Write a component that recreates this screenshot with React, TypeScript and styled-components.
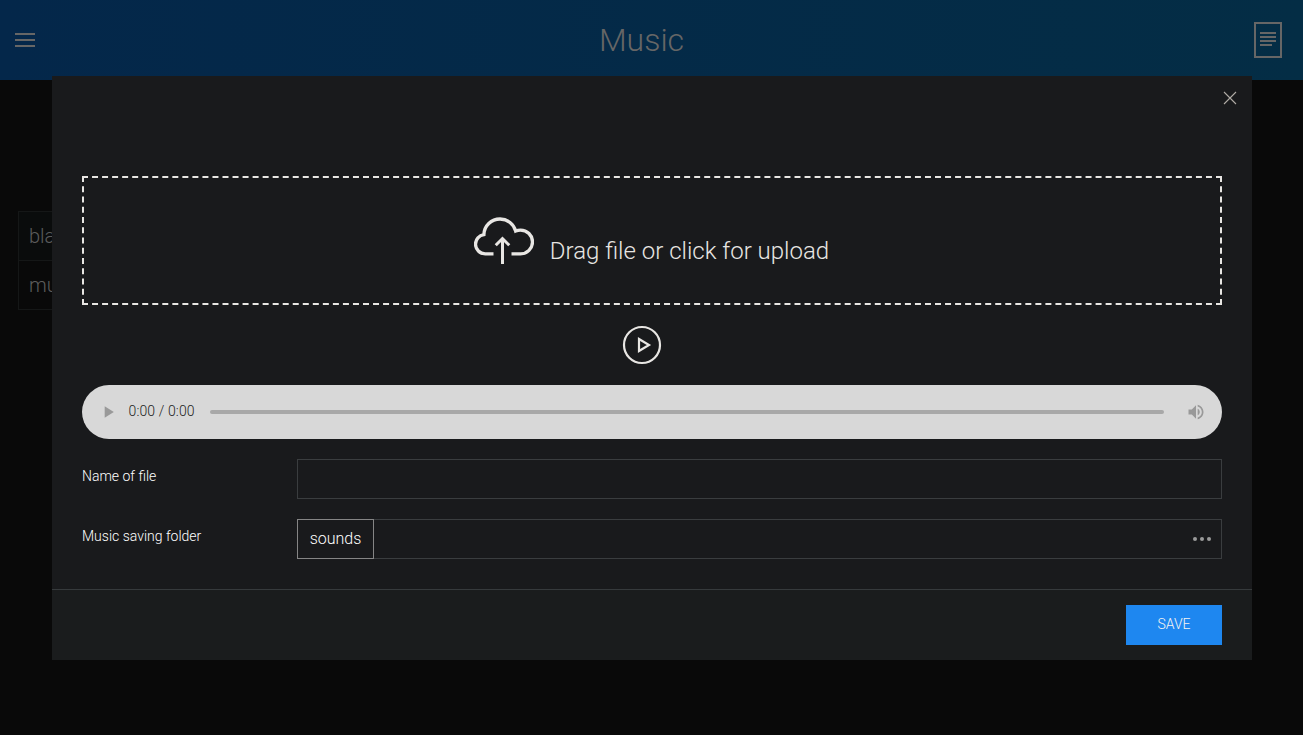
import React from "react";
import styled, { createGlobalStyle } from "styled-components";

const GlobalStyle = createGlobalStyle`
  * { box-sizing: border-box; }
  html, body { height: 100%; }
  body {
    margin: 0;
    overflow: hidden;
    background: #090909;
    font-family: Roboto, "Liberation Sans", sans-serif;
    font-weight: 300;
    font-size: 16px;
    line-height: 1.5;
  }
  svg { display: block; flex: none; }
`;

const Navbar = styled.header`
  display: flex;
  align-items: center;
  justify-content: space-between;
  height: 80px;
  padding: 0 15px;
  color: #666;
  background: linear-gradient(to right, #04274a, #042d45);
`;

const NavTitle = styled.h1`
  margin: 0;
  font-size: 32px;
  font-weight: 300;
  line-height: 80px;
`;

const FolderList = styled.ul`
  list-style: none;
  width: 600px;
  margin: 131px 18px 0;
  padding: 0;
  border: 1px solid #151717;
`;

const FolderItem = styled.li<{ $active?: boolean }>`
  height: ${(p) => (p.$active ? 48 : 49)}px;
  padding-left: 10px;
  font-size: 20px;
  line-height: 49px;
  color: #5c5c5c;
  background: ${(p) => (p.$active ? "#0a0c0c" : "transparent")};
  & + & { border-top: 1px solid #151717; }
`;

const Overlay = styled.div`
  position: fixed;
  inset: 0;
  padding-top: 76px;
  display: flex;
  justify-content: center;
  align-items: flex-start;
`;

const Dialog = styled.section`
  width: 1200px;
  height: 584px;
  margin-left: 1px;
  background: #191a1c;
  color: #e8e6e3;
`;

const DialogTop = styled.div`
  display: flex;
  justify-content: flex-end;
  height: 100px;
  padding: 15px 15px 0;
  color: #b0aca6;
`;

const DialogBody = styled.div`
  height: 413px;
  padding: 0 30px;
`;

const DropZone = styled.div`
  display: flex;
  justify-content: center;
  height: 129px;
  padding: 32px 1px 0 0;
  border: 2px dashed #e8e6e3;
`;

const DropText = styled.span`
  margin: 23px 0 0 16px;
  font-size: 24px;
  line-height: 36px;
`;

const PlayRow = styled.div`
  display: flex;
  justify-content: center;
  padding: 20px 20px 20px 0;
`;

const Player = styled.div`
  display: flex;
  align-items: center;
  height: 54px;
  padding: 0 16px;
  border-radius: 27px;
  background: #d8d8d8;
  color: #999;
`;

const Time = styled.span`
  width: 81.5px;
  margin-left: 10.5px;
  padding-bottom: 2px;
  font-size: 14px;
  line-height: 52px;
  letter-spacing: 0.12px;
  color: #222;
  white-space: pre;
`;

const Track = styled.div`
  flex: 1;
  height: 4px;
  margin-right: 22px;
  border-radius: 2px;
  background: #a8a8a8;
`;

const Field = styled.div`
  display: flex;
  height: 40px;
  margin-top: 20px;
`;

const Label = styled.label`
  width: 215px;
  padding-top: 7px;
  font-size: 14px;
  font-weight: 300;
  line-height: 20px;
  color: #fff;
`;

const InputBox = styled.div`
  flex: 1;
  display: flex;
  align-items: center;
  justify-content: space-between;
  border: 1px solid #3a3d3f;
  padding-right: 9px;
  color: #9a9a9a;
`;

const FolderTag = styled.span`
  height: 40px;
  width: 77px;
  margin: -1px;
  border: 1px solid #858585;
  color: #fff;
  font-size: 16px;
  font-weight: 300;
  line-height: 38px;
  text-align: center;
`;

const DialogFooter = styled.footer`
  display: flex;
  justify-content: flex-end;
  height: 71px;
  padding: 15px 30px;
  border-top: 1px solid #363a3c;
  background: #1a1c1d;
`;

const SaveButton = styled.button`
  width: 96px;
  height: 40px;
  padding: 0 0 2px;
  border: 0;
  background: #1e87f0;
  color: #f4f4f2;
  font: 300 14px/38px Roboto, "Liberation Sans", sans-serif;
`;

const MenuIcon = () => (
  <svg width="20" height="20" viewBox="0 0 20 20" fill="currentColor">
    <rect y="3" width="20" height="2" />
    <rect y="9" width="20" height="2" />
    <rect y="15" width="20" height="2" />
  </svg>
);

const DocumentIcon = () => (
  <svg width="40" height="40" viewBox="0 0 20 20" fill="none" stroke="currentColor">
    <rect x="3.5" y="1.5" width="13" height="17" />
    <path d="M6 6.5H14M6 8.5H14M6 10.5H14M6 12.5H12" />
  </svg>
);

const CloseIcon = () => (
  <svg width="14" height="14" viewBox="0 0 14 14" stroke="currentColor" strokeWidth="1.1">
    <path d="M1 1L13 13M13 1L1 13" />
  </svg>
);

const CloudUploadIcon = () => (
  <svg width="60" height="60" viewBox="0 0 20 20" fill="none" stroke="currentColor">
    <path
      strokeWidth="1.1"
      d="M6.5,14.61 L3.75,14.61 C1.96,14.61 0.5,13.17 0.5,11.39 C0.5,9.76 1.72,8.41 3.3,8.2 C3.38,5.31 5.75,3 8.68,3 C11.19,3 13.31,4.71 13.89,7.02 C14.39,6.8 14.93,6.68 15.5,6.68 C17.71,6.68 19.5,8.45 19.5,10.64 C19.5,12.83 17.71,14.6 15.5,14.6 L12.5,14.6"
    />
    <polyline points="7.25 11.75 9.5 9.5 11.75 11.75" />
    <path d="M9.5,18 L9.5,9.5" />
  </svg>
);

const PlayCircleIcon = () => (
  <svg width="40" height="40" viewBox="0 0 20 20" fill="none" stroke="currentColor" strokeWidth="1.1">
    <polygon points="8.5 7 13.5 10 8.5 13" />
    <circle cx="10" cy="10" r="9" />
  </svg>
);

const PlayIcon = () => (
  <svg width="20" height="20" viewBox="0 0 24 24" fill="currentColor">
    <path d="M8 5v14l11-7z" />
  </svg>
);

const VolumeIcon = () => (
  <svg width="20" height="20" viewBox="0 0 24 24" fill="currentColor">
    <path d="M3 9v6h4l5 5V4L7 9H3zm13.5 3c0-1.77-1.02-3.29-2.5-4.03v8.05c1.48-.73 2.5-2.25 2.5-4.02zM14 3.23v2.06c2.89.86 5 3.54 5 6.71s-2.11 5.85-5 6.71v2.06c4.01-.91 7-4.49 7-8.77s-2.99-7.86-7-8.77z" />
  </svg>
);

const MoreIcon = () => (
  <svg width="20" height="20" viewBox="0 0 20 20" fill="currentColor">
    <circle cx="3" cy="10" r="2" />
    <circle cx="10" cy="10" r="2" />
    <circle cx="17" cy="10" r="2" />
  </svg>
);

export default function App() {
  return (
    <>
      <GlobalStyle />
      <Navbar>
        <MenuIcon />
        <NavTitle>Music</NavTitle>
        <DocumentIcon />
      </Navbar>
      <FolderList>
        <FolderItem $active>black</FolderItem>
        <FolderItem>music</FolderItem>
      </FolderList>
      <Overlay>
        <Dialog>
          <DialogTop>
            <CloseIcon />
          </DialogTop>
          <DialogBody>
            <DropZone>
              <CloudUploadIcon />
              <DropText>Drag file or click for upload</DropText>
            </DropZone>
            <PlayRow>
              <PlayCircleIcon />
            </PlayRow>
            <Player>
              <PlayIcon />
              <Time>0:00 / 0:00</Time>
              <Track />
              <VolumeIcon />
            </Player>
            <Field>
              <Label>Name of file</Label>
              <InputBox />
            </Field>
            <Field>
              <Label>Music saving folder</Label>
              <InputBox>
                <FolderTag>sounds</FolderTag>
                <MoreIcon />
              </InputBox>
            </Field>
          </DialogBody>
          <DialogFooter>
            <SaveButton>SAVE</SaveButton>
          </DialogFooter>
        </Dialog>
      </Overlay>
    </>
  );
}
